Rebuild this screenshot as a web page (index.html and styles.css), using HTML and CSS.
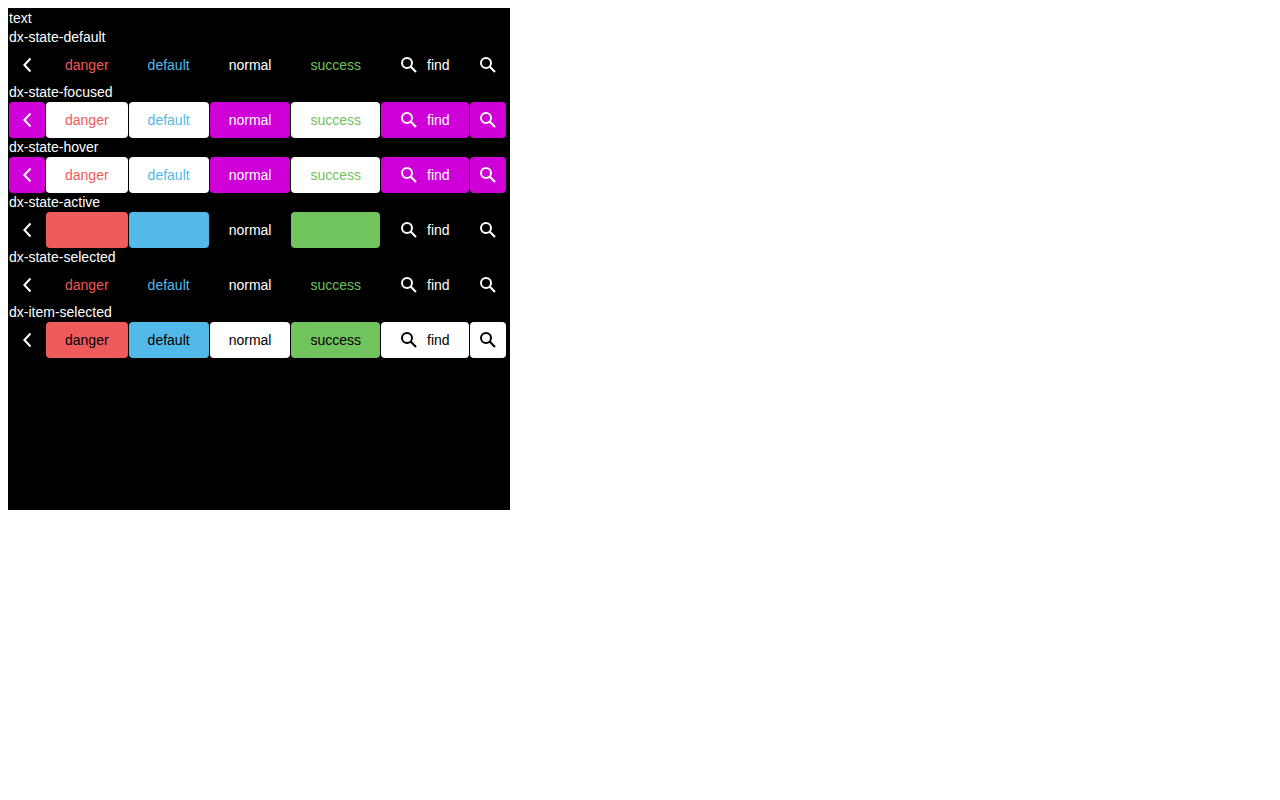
FILE: index.html
```html
<!DOCTYPE html>
<html lang="en">
<head>
<meta charset="utf-8">
<title>Buttons</title>
<link rel="stylesheet" href="styles.css">
</head>
<body>
<svg class="sprite" aria-hidden="true">
  <symbol id="back" viewBox="0 0 18 18"><path d="M12.5 2.5 6.4 9l6.1 6.5" fill="none" stroke="currentColor" stroke-width="2"/></symbol>
  <symbol id="search" viewBox="0 0 18 18"><circle cx="7" cy="7" r="5" fill="none" stroke="currentColor" stroke-width="2"/><path d="m10.6 10.6 5.4 5.4" fill="none" stroke="currentColor" stroke-width="2.1"/></symbol>
</svg>
<main class="panel" id="panel">
  <div class="label">text</div>
</main>
<script src="buttons.js"></script>
</body>
</html>
```
FILE: styles.css
```css
body {
  margin: 8px;
  background: #fff;
}

.sprite {
  position: absolute;
  width: 0;
  height: 0;
}

.panel {
  box-sizing: border-box;
  max-width: 502px;
  min-height: 502px;
  padding: 1px;
  background: #000;
  color: #fff;
  font: 14px/19px "Liberation Sans", Arial, sans-serif;
}

.row {
  display: flex;
  gap: 1px;
}

.button {
  display: flex;
  align-items: center;
  flex: none;
  gap: 9px;
  height: 36px;
  margin: 0;
  padding: 0 18px;
  border: 1px solid transparent;
  border-radius: 4px;
  background: #000;
  color: #fff;
  font: inherit;
  cursor: pointer;
}

.icon-only {
  padding: 0 8px;
}

.icon {
  display: block;
  width: 18px;
  height: 18px;
}

.danger { color: #ef5a5a; }
.default { color: #52b9e9; }
.success { color: #71c35e; }

.focused .button,
.hover .button {
  background: #cf00d7;
}

.focused .danger, .focused .default, .focused .success,
.hover .danger, .hover .default, .hover .success {
  background: #fff;
}

.active .danger, .item-selected .danger { background: #ef5a5a; }
.active .default, .item-selected .default { background: #52b9e9; }
.active .success, .item-selected .success { background: #71c35e; }

.item-selected .normal { background: #fff; }

.item-selected .danger,
.item-selected .default,
.item-selected .normal,
.item-selected .success {
  color: #000;
}
```
FILE: buttons.js
```js
const states = [
  ["dx-state-default", "rest"],
  ["dx-state-focused", "focused"],
  ["dx-state-hover", "hover"],
  ["dx-state-active", "active"],
  ["dx-state-selected", "selected"],
  ["dx-item-selected", "item-selected"]
];

const icon = name => `<svg class="icon" aria-hidden="true"><use href="#${name}"/></svg>`;

const buttons = `
  <button type="button" class="button icon-only" aria-label="Back">${icon("back")}</button>
  <button type="button" class="button danger">danger</button>
  <button type="button" class="button default">default</button>
  <button type="button" class="button normal">normal</button>
  <button type="button" class="button success">success</button>
  <button type="button" class="button normal">${icon("search")}<span>find</span></button>
  <button type="button" class="button normal icon-only" aria-label="Find">${icon("search")}</button>`;

document.getElementById("panel").insertAdjacentHTML("beforeend", states.map(([label, state]) =>
  `<div class="label">${label}</div><div class="row ${state}">${buttons}</div>`).join(""));
```
